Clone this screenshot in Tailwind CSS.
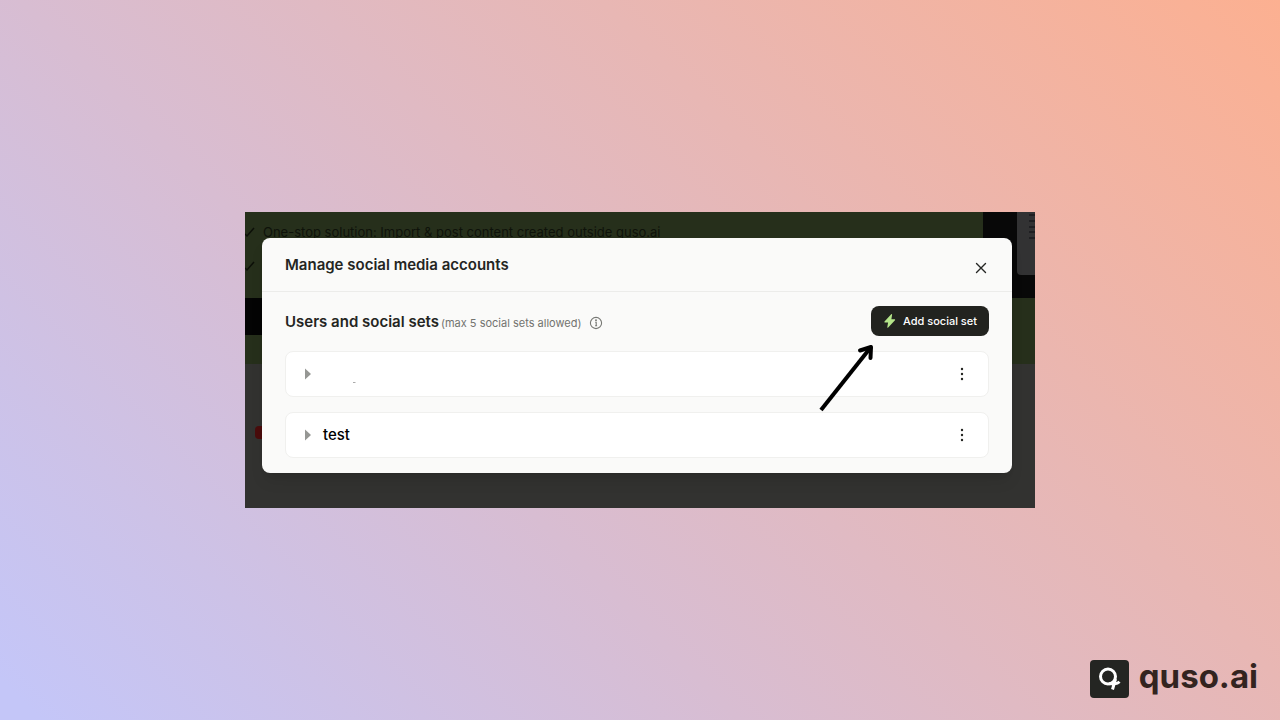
<!DOCTYPE html>
<html lang="en">
<head>
<meta charset="utf-8">
<meta name="viewport" content="width=device-width, initial-scale=1">
<title>Manage social media accounts</title>
<script src="https://cdn.jsdelivr.net/npm/@tailwindcss/browser@4"></script>
</head>
<body class="font-['Inter',sans-serif]">
<main class="relative flex min-h-screen items-center justify-center bg-[linear-gradient(45deg,#c4c6f8_2%,#d8bdd2_37%,#e8b7b4_66%,#fcb091_100%)]">

  <section class="relative w-full max-w-[790px] overflow-hidden bg-[#323230] pt-[26px] pr-[23px] pb-[35px] pl-[17px]">
    <!-- Dimmed page behind the dialog -->
    <div class="absolute inset-0" aria-hidden="true">
      <div class="absolute inset-x-0 top-0 h-[152px] bg-[#262f1b]"></div>
      <div class="absolute top-0 right-0 h-[86px] w-[52px] bg-[#080808]"></div>
      <div class="absolute top-[86px] left-0 h-[37px] w-10 bg-[#040404]"></div>
      <div class="absolute top-0 right-0 h-[63px] w-[18px] rounded-bl bg-[#323233]">
        <svg class="absolute top-0 right-0" width="6" height="30" viewBox="0 0 6 30" stroke="#1f1f22" stroke-width="2"><path d="M0 3h6M0 9h6M0 15h6M0 20h6M0 26h6"/></svg>
      </div>
      <div class="absolute top-[214px] left-[10px] h-[13px] w-5 rounded bg-[#4a0c0c]"></div>
      <svg class="absolute top-3 left-0" width="12" height="50" viewBox="0 0 12 50" fill="none" stroke="#0c0f08" stroke-width="1.5"><path d="M0 10l2 2 7-8M0 44l2 2 7-8"/></svg>
      <p class="absolute top-[10px] left-[18px] text-[13px] leading-5 whitespace-nowrap text-[#0e120a]">One-stop solution: Import &amp; post content created outside quso.ai</p>
    </div>

    <div role="dialog" aria-labelledby="title" class="relative rounded-lg bg-[#fafaf9] shadow-lg">
      <header class="flex items-center justify-between border-b border-[#ececea] px-[23px] pt-[15px] pb-[14px]">
        <h1 id="title" class="text-[15px] leading-6 font-semibold text-[#242522]">Manage social media accounts</h1>
        <button type="button" aria-label="Close" class="mt-[6px] flex size-4 items-center justify-center">
          <svg width="12" height="12" viewBox="0 0 12 12" fill="none" stroke="#252624" stroke-width="1.4" stroke-linecap="round"><path d="M1.5 1.5l9 9M10.5 1.5l-9 9"/></svg>
        </button>
      </header>

      <div class="flex flex-col gap-[15px] px-[23px] pt-[14px] pb-[15px]">
        <div class="flex items-center justify-between">
          <div class="flex items-baseline gap-0.5 pt-[2px]">
            <h2 class="text-[15px] leading-6 font-semibold text-[#242522]">Users and social sets</h2>
            <p class="text-[11px] text-[#72736f]">(max 5 social sets allowed)</p>
            <button type="button" aria-label="More information" class="ml-[6px] self-center pt-[2px]">
              <svg width="14" height="14" viewBox="0 0 14 14" fill="none" stroke="#777874" stroke-width="1.1"><circle cx="7" cy="7" r="5.6"/><path d="M6.200 6.3h1v3.600M6.100 9.8h2"/><circle cx="7" cy="4.2" r=".4" fill="#777874"/></svg>
            </button>
          </div>
          <button type="button" class="flex h-[30px] items-center gap-[6px] rounded-lg bg-[#22231f] px-3 text-[11px] font-medium text-white">
            <svg width="14" height="16" viewBox="0 0 14 16" fill="#b5e58a"><path d="M8.2 1.2L1.5 8.6q-.5.8.4.9h3.2l-.8 4.7q.1.9.9.3l6.8-7.3q.5-.8-.4-.9H8.400l.7-4.700q-.1-.9-.9-.4z"/></svg>
            Add social set
          </button>
        </div>

        <ul class="flex flex-col gap-[15px]">
          <li class="flex h-[46px] items-center gap-3 rounded-lg border border-[#f0f0ee] bg-white pr-[22px] pl-[19px]">
            <button type="button" aria-label="Expand set"><svg width="6" height="12" viewBox="0 0 6 12" fill="#969794"><path d="M0 .5L6 6 0 11.500z"/></svg></button>
            <svg class="mt-4" width="40" height="4" viewBox="0 0 40 4" aria-hidden="true"><path d="M30 2.500h2.500" stroke="#aaa"/></svg>
            <button type="button" aria-label="Set options" class="ml-auto"><svg width="8" height="14" viewBox="0 0 8 14" fill="#242522"><circle cx="4" cy="2" r="1.200"/><circle cx="4" cy="7" r="1.200"/><circle cx="4" cy="12" r="1.200"/></svg></button>
          </li>
          <li class="flex h-[46px] items-center gap-3 rounded-lg border border-[#f0f0ee] bg-white pr-[22px] pl-[19px]">
            <button type="button" aria-label="Expand test"><svg width="6" height="12" viewBox="0 0 6 12" fill="#969794"><path d="M0 .5L6 6 0 11.500z"/></svg></button>
            <span class="text-[15px] leading-6 font-medium text-black">test</span>
            <button type="button" aria-label="test options" class="ml-auto"><svg width="8" height="14" viewBox="0 0 8 14" fill="#242522"><circle cx="4" cy="2" r="1.200"/><circle cx="4" cy="7" r="1.200"/><circle cx="4" cy="12" r="1.200"/></svg></button>
          </li>
        </ul>
      </div>
      <!-- Arrow pointing at the add button -->
      <svg class="pointer-events-none absolute top-[104px] right-[135px]" width="60" height="72" viewBox="0 0 60 72" fill="none" stroke="#000" stroke-width="4" stroke-linejoin="round" aria-hidden="true"><path d="M4 68L54 5"/><path d="M43 8.500L54 5L53.500 16" stroke-linecap="round"/></svg>
    </div>
  </section>

  <div class="absolute right-[22px] bottom-5 flex items-center gap-[9px]">
    <svg width="40" height="40" viewBox="0 0 40 40" role="img" aria-label="quso logo"><rect y="1" width="39" height="38" rx="4" fill="#242522"/><g fill="none" stroke="#fff" stroke-width="3"><circle cx="18" cy="17.500" r="7.500"/><path d="M22.500 30.500L25.500 20M19 24.800h6q2.500 0 4.500-2"/></g></svg>
    <span class="pb-[6px] text-[33px] leading-[36px] font-bold text-[#33241f]">quso.ai</span>
  </div>
</main>
</body>
</html>
